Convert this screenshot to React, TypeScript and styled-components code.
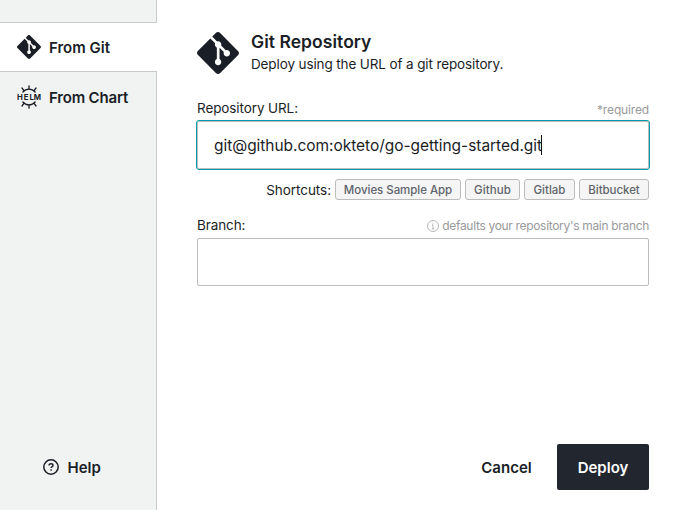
import React from "react";
import styled, { createGlobalStyle } from "styled-components";
import { SiGit } from "react-icons/si";

const GlobalStyle = createGlobalStyle`
  *, *::before, *::after { box-sizing: border-box; }
  body {
    margin: 0;
    background: #fff;
    color: #1a1e26;
    font-family: Inter, "Liberation Sans", sans-serif;
    -webkit-font-smoothing: antialiased;
  }
  button { font-family: inherit; color: inherit; margin: 0; }
`;

const Dialog = styled.div`
  display: grid;
  grid-template-columns: 157px 1fr;
  height: 510px;
  overflow: hidden;
`;

const Sidebar = styled.nav`
  display: flex;
  flex-direction: column;
  padding-top: 22px;
  background: linear-gradient(#cacaca, #cacaca) right / 1px 100% no-repeat #f1f3f3;
`;

const Tab = styled.button<{ $active?: boolean }>`
  display: flex;
  align-items: center;
  gap: 8px;
  height: 50px;
  padding: 0 0 0 17px;
  border: solid ${(p) => (p.$active ? "#cacaca" : "transparent")};
  border-width: 1px 0;
  background: ${(p) => (p.$active ? "#fff" : "transparent")};
  font-size: 15px;
  font-weight: 600;
  text-align: left;
  white-space: nowrap;
`;

const Spaced = styled.span<{ $spacing: number }>`
  letter-spacing: ${(p) => p.$spacing}px;
  white-space: nowrap;
`;

const HelpLink = styled.button`
  display: flex;
  align-items: center;
  gap: 8.5px;
  height: 24px;
  margin: auto 0 31px;
  padding: 0 0 0 43px;
  border: 0;
  background: none;
  font-size: 15px;
  font-weight: 600;
`;

const Main = styled.main`
  display: flex;
  flex-direction: column;
  padding: 32px 27px 20px 40px;
`;

const Header = styled.header`
  display: flex;
  gap: 12px;
  height: 42px;
`;

const Heading = styled.div`
  display: flex;
  flex-direction: column;
  margin-top: -1px;
`;

const Title = styled.h1`
  margin: 0;
  font-size: 17.5px;
  font-weight: 600;
  line-height: 21px;
`;

const Subtitle = styled.p`
  margin: 2px 0 0;
  font-size: 13.5px;
  line-height: 21px;
`;

const FieldHead = styled.div<{ $top: number }>`
  display: flex;
  justify-content: space-between;
  align-items: flex-start;
  height: 20px;
  margin: ${(p) => p.$top}px 0 3px;
  font-size: 13.5px;
  line-height: 20px;
`;

const Hint = styled.span<{ $drop: number }>`
  display: inline-flex;
  align-items: center;
  gap: 3px;
  margin-top: ${(p) => p.$drop}px;
  color: #999a9c;
  font-size: 12px;
`;

const Field = styled.div<{ $focused?: boolean }>`
  display: flex;
  align-items: center;
  height: 48px;
  flex: none;
  padding: 0 16px;
  border: 1px solid #bdbdbd;
  border-radius: 2px;
  outline: ${(p) => (p.$focused ? "1px solid #009aad" : "none")};
  font-size: 15.5px;
`;

const Caret = styled.span`
  width: 1px;
  height: 20px;
  margin-left: -1px;
  background: #111;
`;

const Shortcuts = styled.div`
  display: flex;
  justify-content: flex-end;
  align-items: center;
  gap: 4px;
  height: 21px;
  margin-top: 10px;
  font-size: 13.5px;
`;

const Chip = styled.button<{ $width: number }>`
  width: ${(p) => p.$width}px;
  height: 21px;
  padding: 1px 0 0;
  border: 1px solid #bcbcbc;
  border-radius: 3px;
  background: #f5f5f5;
  color: #60646b;
  font-size: 11.5px;
  font-weight: 500;
  line-height: 18px;
  white-space: nowrap;
`;

const Actions = styled.footer`
  display: flex;
  justify-content: flex-end;
  gap: 5px;
  margin-top: auto;
`;

const ActionButton = styled.button<{ $primary?: boolean }>`
  height: 46px;
  width: ${(p) => (p.$primary ? 92 : 91)}px;
  padding: 0;
  border: 0;
  border-radius: 2px;
  background: ${(p) => (p.$primary ? "#22262f" : "none")};
  color: ${(p) => (p.$primary ? "#fff" : "#1a1e26")};
  font-size: 15px;
  font-weight: 600;
`;

const HelmIcon = () => (
  <svg width="24" height="24" viewBox="0 0 24 24" fill="none" stroke="currentColor" strokeWidth="1.3" strokeLinecap="round">
    <path d="M5.9 7A7.9 7.9 0 0 1 18.1 7M5.9 17A7.9 7.9 0 0 0 18.1 17" />
    <path d="M12 .8V4M12 20V23.2M5 3L6.9 5.6M19 3L17.1 5.6M5 21L6.9 18.4M19 21L17.1 18.4" />
    <g fill="currentColor" stroke="none" fontSize="7.8" fontWeight="700" textAnchor="middle">
      <text x="2.9" y="14.8">H</text>
      <text x="9.2" y="14.8">E</text>
      <text x="14.8" y="14.8">L</text>
      <text x="20.5" y="14.8">M</text>
    </g>
  </svg>
);

const HelpIcon = () => (
  <svg width="16" height="16" viewBox="0 0 16 16" fill="none" stroke="currentColor">
    <circle cx="8" cy="8" r="7.2" strokeWidth="1.5" />
    <path d="M6 6.5C6 5.3 6.8 4.7 8 4.7S10 5.4 10 6.4C10 7.7 8.1 7.6 8.1 9.1" strokeWidth="1.4" />
    <path d="M8.1 10.3V11.7" strokeWidth="1.5" />
  </svg>
);

const InfoIcon = () => (
  <svg width="12" height="12" viewBox="0 0 12 12" fill="none" stroke="currentColor" strokeWidth="0.7">
    <circle cx="6" cy="6" r="5.5" />
    <path d="M6 4.8V9M5 4.8H6M4.8 9H7.2M6 2.6V3.5" />
  </svg>
);

const shortcuts = [
  { label: "Movies Sample App", width: 126, spacing: -0.05 },
  { label: "Github", width: 55, spacing: 0.1 },
  { label: "Gitlab", width: 51, spacing: 0 },
  { label: "Bitbucket", width: 70, spacing: -0.05 },
];

export default function App() {
  return (
    <>
      <GlobalStyle />
      <Dialog>
        <Sidebar>
          <Tab $active>
            <SiGit size={24} />
            <Spaced $spacing={0}>From Git</Spaced>
          </Tab>
          <Tab>
            <HelmIcon />
            <Spaced $spacing={-0.18}>From Chart</Spaced>
          </Tab>
          <HelpLink>
            <HelpIcon />
            <Spaced $spacing={0}>Help</Spaced>
          </HelpLink>
        </Sidebar>
        <Main>
          <Header>
            <SiGit size={42} />
            <Heading>
              <Title><Spaced $spacing={0.05}>Git Repository</Spaced></Title>
              <Subtitle><Spaced $spacing={-0.12}>Deploy using the URL of a git repository.</Spaced></Subtitle>
            </Heading>
          </Header>
          <FieldHead $top={24}>
            <Spaced $spacing={-0.1}>Repository URL:</Spaced>
            <Hint $drop={2}><Spaced $spacing={-0.15}>*required</Spaced></Hint>
          </FieldHead>
          <Field $focused>
            <Spaced $spacing={-0.04}>git@github.com:okteto/go-getting-started.git</Spaced>
            <Caret />
          </Field>
          <Shortcuts>
            <Spaced $spacing={-0.05}>Shortcuts:</Spaced>
            {shortcuts.map((s) => (
              <Chip key={s.label} $width={s.width}>
                <Spaced $spacing={s.spacing}>{s.label}</Spaced>
              </Chip>
            ))}
          </Shortcuts>
          <FieldHead $top={15}>
            <Spaced $spacing={-0.1}>Branch:</Spaced>
            <Hint $drop={1}>
              <InfoIcon />
              <Spaced $spacing={-0.32}>defaults your repository's main branch</Spaced>
            </Hint>
          </FieldHead>
          <Field />
          <Actions>
            <ActionButton><Spaced $spacing={0}>Cancel</Spaced></ActionButton>
            <ActionButton $primary><Spaced $spacing={0}>Deploy</Spaced></ActionButton>
          </Actions>
        </Main>
      </Dialog>
    </>
  );
}
